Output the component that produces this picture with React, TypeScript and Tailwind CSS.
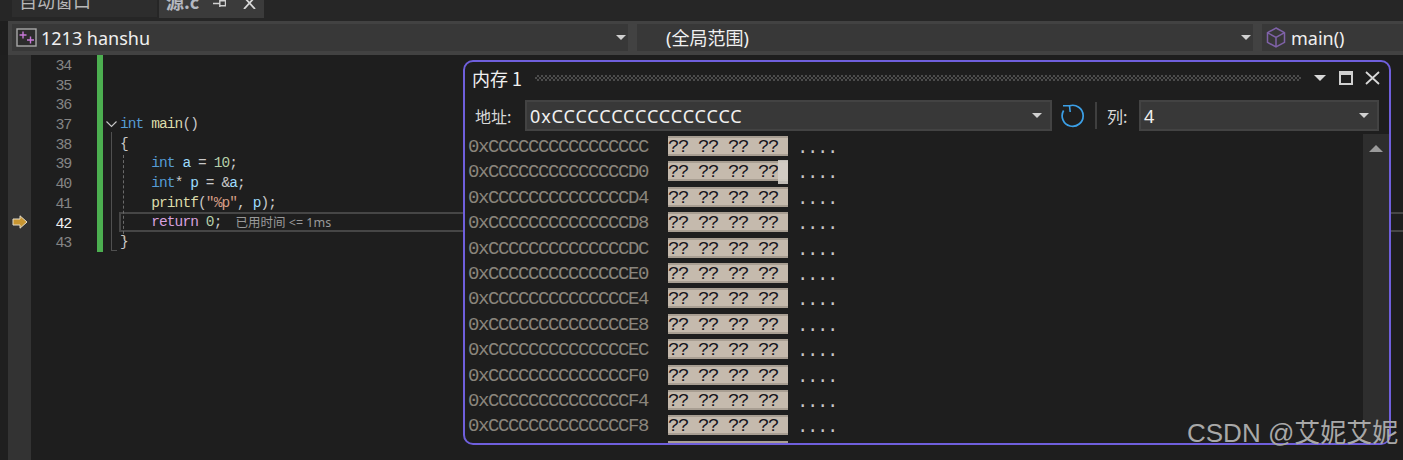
import React from "react";

type Tok = [string, string];

const BLUE = "text-[#569cd6]";
const VAR = "text-[#9cdcfe]";
const FN = "text-[#dcdcaa]";
const NUM = "text-[#b5cea8]";
const KW = "text-[#d8a0df]";
const STR = "text-[#d69d85]";
const TXT = "text-[#c8c8c8]";

const lines: { no: number; toks: Tok[] }[] = [
  { no: 34, toks: [] },
  { no: 35, toks: [] },
  { no: 36, toks: [] },
  { no: 37, toks: [["int", BLUE], [" ", TXT], ["main", FN], ["()", TXT]] },
  { no: 38, toks: [["{", TXT]] },
  { no: 39, toks: [["    ", TXT], ["int", BLUE], [" ", TXT], ["a", VAR], [" = ", TXT], ["10", NUM], [";", TXT]] },
  { no: 40, toks: [["    ", TXT], ["int", BLUE], ["* ", TXT], ["p", VAR], [" = &", TXT], ["a", VAR], [";", TXT]] },
  { no: 41, toks: [["    ", TXT], ["printf", FN], ["(", TXT], ["\"%p\"", STR], [", ", TXT], ["p", VAR], [");", TXT]] },
  { no: 42, toks: [["    ", TXT], ["return", KW], [" ", TXT], ["0", NUM], [";", TXT]] },
  { no: 43, toks: [["}", TXT]] },
];

const addrs = ["CC", "D0", "D4", "D8", "DC", "E0", "E4", "E8", "EC", "F0", "F4", "F8", "FC"];

function Caret({ className = "" }: { className?: string }) {
  return (
    <svg width="10" height="5" viewBox="0 0 10 5" className={className}>
      <path d="M0 0h10L5 5z" fill="#d0d0d0" />
    </svg>
  );
}

function Combo({ children, className = "" }: { children: React.ReactNode; className?: string }) {
  return (
    <div className={`flex h-[31px] items-center border-2 border-[#434343] bg-[#383838] font-['Noto_Sans','Noto_Sans_CJK_SC',sans-serif] text-[18px] text-[#f0f0f0] ${className}`}>
      <span className="flex-1 pl-[3px] leading-none">{children}</span>
      <Caret className="mr-[8px]" />
    </div>
  );
}

function NavCombo({ children, className = "", caret = true }: { children: React.ReactNode; className?: string; caret?: boolean }) {
  return (
    <div className={`flex h-[27px] items-center bg-[#383838] font-['Noto_Sans','Noto_Sans_CJK_SC',sans-serif] text-[18px] text-[#f0f0f0] ${className}`}>
      <div className="flex flex-1 items-center leading-none">{children}</div>
      {caret && <Caret className="mr-[2px]" />}
    </div>
  );
}

function MemoryWindow() {
  return (
    <div className="absolute left-[463px] top-[5px] flex h-[385px] w-[928px] flex-col overflow-hidden rounded-[10px] border-2 border-[#6f5fdc] bg-[#1e1e1e]">
      <div className="flex h-[32px] shrink-0 items-center pl-[7px]">
        <span className="w-[63px] font-['Noto_Sans_CJK_SC',sans-serif] text-[18px] leading-none text-[#f0f0f0]">内存 1</span>
        <div className="h-[6px] w-[766px] bg-[repeating-conic-gradient(#4c4c4c_0_25%,transparent_0_50%)] bg-[length:4px_4px]" />
        <svg width="12" height="6" viewBox="0 0 12 6" className="ml-[13px]">
          <path d="M0 0h12L6 6z" fill="#d8d8d8" />
        </svg>
        <div className="ml-[13px] h-[14px] w-[14px] border-2 border-t-[4px] border-[#d0d0d0]" />
        <svg width="15" height="14" viewBox="0 0 15 14" className="ml-[12px]">
          <path d="M1 1l13 12M14 1L1 13" stroke="#d8d8d8" strokeWidth="1.8" fill="none" />
        </svg>
      </div>
      <div className="mt-[6px] flex h-[31px] shrink-0 items-center">
        <span className="ml-[10px] w-[50px] font-['Noto_Sans_CJK_SC',sans-serif] text-[16px] text-[#d8d8d8]">地址:</span>
        <Combo className="w-[527px] tracking-[0.9px]">0xCCCCCCCCCCCCCCCC</Combo>
        <svg width="24" height="24" viewBox="0 0 24 24" className="ml-[9px]">
          <path d="M8.5 1.8A10.5 10.5 0 1 1 2.6 6.5" fill="none" stroke="#3b9fe6" strokeWidth="1.7" />
          <path d="M2 1.8H8.5L9.2 8" fill="none" stroke="#3b9fe6" strokeWidth="1.6" />
        </svg>
        <div className="ml-[10px] h-[27px] w-[2px] bg-[#3f3f3f]" />
        <span className="ml-[10px] w-[32px] font-['Noto_Sans_CJK_SC',sans-serif] text-[16px] text-[#d8d8d8]">列:</span>
        <Combo className="w-[240px]">4</Combo>
      </div>
      <div className="mt-[3px] flex min-h-0 flex-1">
        <div className="flex-1 overflow-hidden pl-[3px] font-['Liberation_Mono',monospace] text-[19px] tracking-[-1.4px]">
          {addrs.map((a, i) => (
            <div key={a} className="relative flex h-[25.4px] items-start whitespace-pre">
              <span className="w-[200px] pt-[2px] leading-[22px] text-[#8a857c]">{"0xCCCCCCCCCCCCCC" + a}</span>
              <span className="mt-[2px] h-[20px] w-[120px] border-y-2 border-[#a89e92] bg-[#c5baad] leading-[18px] text-[#15151c]">?? ?? ?? ??</span>
              <span className="ml-[9px] pt-[3px] leading-[22px] text-[#c8c8c8]">....</span>
              {i === 1 && <div className="absolute left-[310px] top-[1px] h-[24px] w-[10px] bg-[#d3cec8]/90" />}
            </div>
          ))}
        </div>
        <div className="flex w-[26px] shrink-0 justify-center bg-[#2e2e2e] pt-[11px]">
          <svg width="14" height="7" viewBox="0 0 14 7">
            <path d="M7 0l7 7H0z" fill="#9a9a9a" />
          </svg>
        </div>
      </div>
    </div>
  );
}

export default function App() {
  return (
    <div className="flex h-[460px] w-[1403px] flex-col overflow-hidden bg-[#1e1e1e]">
      {/* doc tabs, cut off by the top of the picture */}
      <div className="flex h-[21px] shrink-0 items-start overflow-hidden bg-[#262626] font-['Noto_Sans_CJK_SC',sans-serif] text-[#b8b8b8]">
        <div className="ml-[12px] h-[17px] w-[145px] overflow-hidden bg-[#2d2d2d] pl-[7px]">
          <div className="mt-[-12px] text-[18px] leading-[24px]">自动窗口</div>
        </div>
        <div className="ml-[2px] flex h-[18px] w-[105px] items-start overflow-hidden bg-[#3b3b3b] pl-[7px]">
          <div className="mt-[-11px] w-[47px] text-[18px] font-bold leading-[24px] text-[#b4b8c0]">源.c</div>
          <svg width="13" height="8" viewBox="0 0 13 8">
            <path d="M0 3.5h7M6.8 0v7M7 0.8h5.5v5H7" fill="none" stroke="#d0d0d0" strokeWidth="1.4" />
          </svg>
          <svg width="15" height="9" viewBox="0 0 15 9" className="ml-[16px]">
            <path d="M2-3l11 12M13-3L2 9" stroke="#d8d8d8" strokeWidth="1.8" fill="none" />
          </svg>
        </div>
      </div>

      {/* nav bar */}
      <div className="ml-[8px] flex h-[34px] shrink-0 items-start gap-[9px] bg-[#424242] pl-[4px] pt-[3px]">
        <NavCombo className="w-[616px]">
          <svg width="22" height="20" viewBox="0 0 22 20" className="ml-[4px] mr-[3px] shrink-0">
            <rect x="1" y="1" width="19" height="17" fill="#2c2c2c" stroke="#a8a8a8" strokeWidth="1.4" />
            <path d="M7 3.5v7M3.5 7h7M14.5 8.5v7M11 12h7" stroke="#c678d8" strokeWidth="1.4" fill="none" />
          </svg>
          1213 hanshu
        </NavCombo>
        <NavCombo className="w-[616px] pl-[29px]">(全局范围)</NavCombo>
        <NavCombo className="flex-1" caret={false}>
          <svg width="20" height="21" viewBox="0 0 20 21" className="ml-[4px] mr-[5px] shrink-0">
            <path d="M10 1l8.5 4.7v9.6L10 20l-8.5-4.7V5.7zM1.5 5.7L10 10.5l8.5-4.8M10 10.5V20" fill="none" stroke="#7f62a8" strokeWidth="1.5" />
          </svg>
          main()
        </NavCombo>
      </div>

      {/* editor */}
      <div className="relative flex min-h-0 flex-1">
        <div className="w-[8px] shrink-0 bg-[#1f1f1f]" />
        <div className="flex w-[23px] shrink-0 flex-col bg-[#333333]">
          <div className="h-[157.6px]" />
          <div className="flex h-[19.7px] items-center justify-center">
            <svg width="16" height="14" viewBox="0 0 16 14">
              <path d="M1 4h7V0.8L15 7l-7 6.2V10H1z" fill="#c89632" stroke="#e4dcc8" strokeWidth="1" />
            </svg>
          </div>
        </div>
        <div className="flex w-[66px] shrink-0 flex-col">
          {lines.map((l) => (
            <div
              key={l.no}
              className={`h-[19.7px] pr-[26px] pt-[2px] text-right font-['Liberation_Mono',monospace] text-[15px] leading-[19.7px] tracking-[-1.2px] ${l.no === 42 ? "text-[#f0f0f0]" : "text-[#858585]"}`}
            >
              {l.no}
            </div>
          ))}
        </div>
        <div className="h-[197px] w-[6px] shrink-0 bg-[#4caf50]" />
        <div className="relative flex-1">
          {lines.map((l) => (
            <div key={l.no} className="relative flex h-[19.7px] items-center whitespace-pre pt-[2px] font-['Liberation_Mono',monospace] text-[14.5px] tracking-[-0.9px]">
              {l.no === 42 && <div className="absolute left-[16px] right-0 top-[-1px] h-[20px] border-2 border-r-0 border-[#464646]" />}
              <div className="flex w-[17px] shrink-0 justify-center">
                {l.no === 37 && (
                  <svg width="11" height="7" viewBox="0 0 11 7">
                    <path d="M0.5 0.5L5.5 5.5L10.5 0.5" fill="none" stroke="#c8c8c8" strokeWidth="1.1" />
                  </svg>
                )}
              </div>
              {l.toks.map(([t, c], i) => (
                <span key={i} className={c}>{t}</span>
              ))}
              {l.no === 42 && (
                <span className="ml-[14px] font-['Noto_Sans','Noto_Sans_CJK_SC',sans-serif] text-[12.5px] tracking-normal text-[#9a9a9a]">已用时间 {"<="} 1ms</span>
              )}
            </div>
          ))}
          {/* outline guides */}
          <div className="absolute left-[8px] top-[77px] h-[119px] w-[6px] border-b border-l border-[#505050]" />
          <div className="absolute left-[20px] top-[100px] h-[84px] border-l border-dashed border-[#6a6a6a]" />
        </div>
        <MemoryWindow />
      </div>

      <div className="pointer-events-none absolute left-[1187px] top-[415px] whitespace-nowrap font-['Liberation_Sans','Noto_Sans_CJK_SC',sans-serif] text-[26px] leading-[36px] text-[#a8a8a8]">
        CSDN @艾妮艾妮
      </div>
    </div>
  );
}
